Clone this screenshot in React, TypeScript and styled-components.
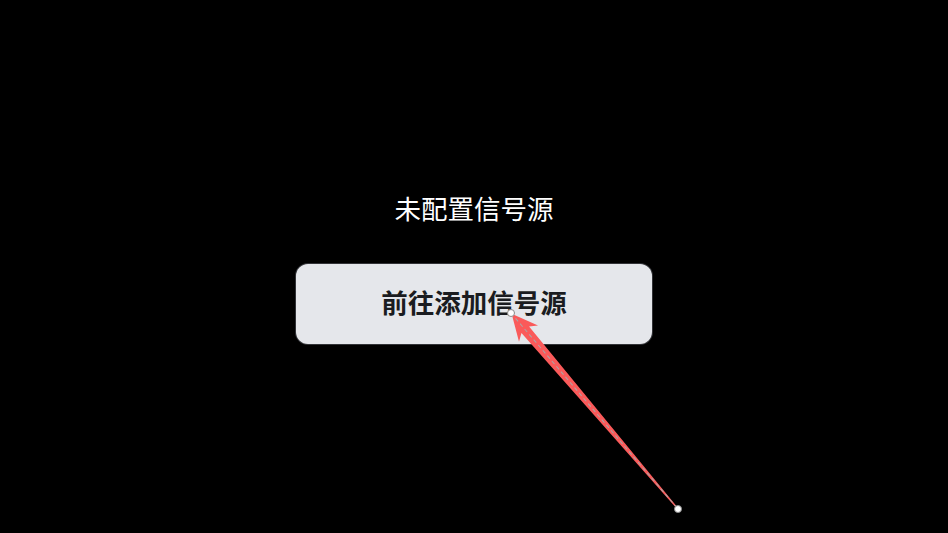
import { FC } from "react";
import styled, { createGlobalStyle } from "styled-components";

const GlobalStyle = createGlobalStyle`
  html, body {
    margin: 0;
    padding: 0;
    background: #000;
  }
  body {
    font-family: "Noto Sans CJK SC", "Noto Sans", sans-serif;
  }
`;

const Screen = styled.div`
  position: relative;
  width: 948px;
  height: 533px;
  background: #000;
  overflow: hidden;
  display: flex;
  flex-direction: column;
  align-items: center;
  justify-content: center;
  gap: 37px;
`;

const EmptyTitle = styled.div`
  color: #fff;
  font-size: 26.5px;
  line-height: 38px;
  font-weight: 400;
`;

const GoButton = styled.button`
  width: 356px;
  height: 80px;
  border: none;
  border-radius: 12px;
  background: #e5e7eb;
  box-shadow: 0 0 0 1px rgba(110, 114, 122, 0.45);
  color: #1a1c20;
  font-family: "Noto Sans CJK SC", "Noto Sans", sans-serif;
  font-size: 26.5px;
  font-weight: 700;
  cursor: pointer;
  padding: 0 0 5px;
`;

const Overlay = styled.svg`
  position: absolute;
  left: 0;
  top: 0;
  pointer-events: none;
`;

const tip = { x: 511, y: 313 };
const tail = { x: 678, y: 509 };

const PointerArrow: FC = () => {
  const dx = tail.x - tip.x;
  const dy = tail.y - tip.y;
  const len = Math.sqrt(dx * dx + dy * dy);
  const angle = (Math.atan2(dy, dx) * 180) / Math.PI;
  return (
    <Overlay width={948} height={533}>
      <g transform={`translate(${tip.x} ${tip.y}) rotate(${angle})`}>
        <polygon
          points={`1,0 27,-12.5 22,-5 ${len},-0.6 ${len},0.6 22,5 27,12.5`}
          fill="#fa5a5a"
        />
        <line x1={0} y1={0} x2={len} y2={0} stroke="#a8a8a8" strokeWidth={1} strokeDasharray="4 3" />
      </g>
      <circle cx={tip.x} cy={tip.y} r={3.5} fill="#fff" stroke="#8a8a8a" strokeWidth={1} />
      <circle cx={tail.x} cy={tail.y} r={3.5} fill="#fff" stroke="#8a8a8a" strokeWidth={1} />
    </Overlay>
  );
};

const App: FC = () => {
  return (
    <>
      <GlobalStyle />
      <Screen>
        <EmptyTitle>未配置信号源</EmptyTitle>
        <GoButton>前往添加信号源</GoButton>
        <PointerArrow />
      </Screen>
    </>
  );
};

export default App;
